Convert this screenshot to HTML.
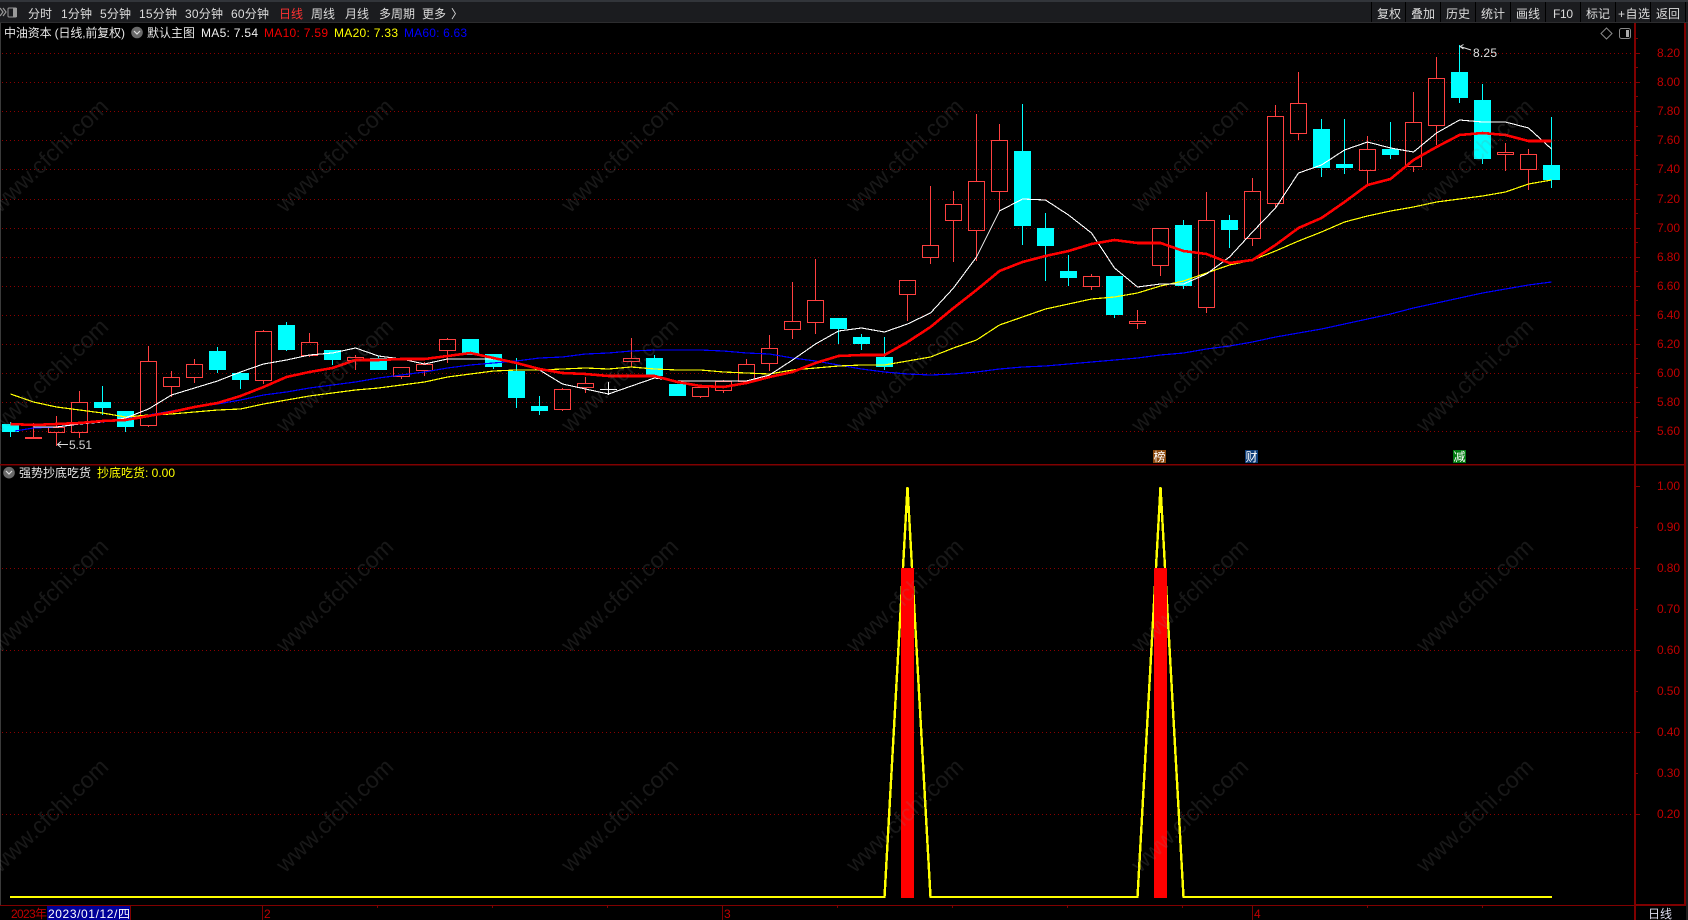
<!DOCTYPE html>
<html><head><meta charset="utf-8"><title>中油资本</title>
<style>
html,body{margin:0;padding:0;background:#000;width:1688px;height:920px;overflow:hidden}
svg{display:block}
text{font-family:"Liberation Sans","Noto Sans CJK SC",sans-serif;font-size:12px}
.c{shape-rendering:crispEdges}
</style></head><body>
<svg width="1688" height="920" viewBox="0 0 1688 920" xmlns="http://www.w3.org/2000/svg">
<rect width="1688" height="920" fill="#000"/>
<!-- toolbar -->
<g class="c">
<rect x="0" y="0" width="1688" height="2" fill="#32353a"/>
<rect x="0" y="2" width="1688" height="20" fill="#1b1c1f"/>
<rect x="0" y="22" width="1688" height="1" fill="#2c2c2e"/>
<path d="M1371.5 2V22M1405.5 2V22M1440.5 2V22M1475.5 2V22M1510.5 2V22M1545.5 2V22M1580.5 2V22M1615.5 2V22M1650.5 2V22M1685.5 2V22" stroke="#000" fill="none"/>
<rect x="0" y="23" width="1" height="882" fill="#3a3a3a"/>
<rect x="1686" y="23" width="2" height="897" fill="#1c1c1c"/>
</g>
<!-- toolbar icon -->
<path d="M0 8l3 4-3 4M3 8l3 4-3 4" stroke="#999" stroke-width="1.2" fill="none"/>
<rect x="8" y="8" width="8.5" height="9" rx="1" fill="none" stroke="#999"/><rect x="13" y="8" width="4" height="9" fill="#999"/>
<g fill="#dcdcdc">
<text x="28" y="18" textLength="24">分时</text>
<text x="61" y="18" textLength="31">1分钟</text>
<text x="100" y="18" textLength="31">5分钟</text>
<text x="139" y="18" textLength="38">15分钟</text>
<text x="185" y="18" textLength="38">30分钟</text>
<text x="231" y="18" textLength="38">60分钟</text>
<text x="279" y="18" textLength="24" fill="#ff3232">日线</text>
<text x="311" y="18" textLength="24">周线</text>
<text x="345" y="18" textLength="24">月线</text>
<text x="379" y="18" textLength="36">多周期</text>
<text x="422" y="18" textLength="24">更多</text>
<text x="451" y="18">〉</text>
<text x="1377" y="18" textLength="24">复权</text>
<text x="1411" y="18" textLength="24">叠加</text>
<text x="1446" y="18" textLength="24">历史</text>
<text x="1481" y="18" textLength="24">统计</text>
<text x="1516" y="18" textLength="24">画线</text>
<text x="1553" y="18" textLength="20">F10</text>
<text x="1586" y="18" textLength="24">标记</text>
<text x="1618" y="18" textLength="32">+自选</text>
<text x="1656" y="18" textLength="24">返回</text>
</g>
<!-- grid -->
<g class="c" stroke="#8b0000" stroke-dasharray="1 3" fill="none">
<path d="M2 53.5H1632M2 82.5H1632M2 111.5H1632M2 140.5H1632M2 169.5H1632M2 199.5H1632M2 228.5H1632M2 257.5H1632M2 286.5H1632M2 315.5H1632M2 344.5H1632M2 373.5H1632M2 402.5H1632M2 431.5H1632"/>
<path d="M2 568.5H1632M2 650.5H1632M2 732.5H1632M2 814.5H1632"/>
</g>
<!-- frame lines -->
<g class="c" fill="#800000">
<rect x="0" y="464" width="1685" height="1.5"/>
<rect x="1634" y="23" width="2" height="897"/>
<rect x="1684" y="23" width="2" height="882"/>
<rect x="0" y="905" width="1634" height="1"/>
<rect x="1634" y="904" width="52" height="2"/>
</g>
<path class="c" stroke="#800000" fill="none" d="M1636 38.5h2M1636 67.5h2M1636 96.5h2M1636 126.5h2M1636 155.5h2M1636 184.5h2M1636 213.5h2M1636 242.5h2M1636 271.5h2M1636 300.5h2M1636 329.5h2M1636 358.5h2M1636 387.5h2M1636 417.5h2M1636 53.5h4M1636 82.5h4M1636 111.5h4M1636 140.5h4M1636 169.5h4M1636 199.5h4M1636 228.5h4M1636 257.5h4M1636 286.5h4M1636 315.5h4M1636 344.5h4M1636 373.5h4M1636 402.5h4M1636 431.5h4M1636 486.5h4M1636 527.5h2M1636 568.5h4M1636 609.5h2M1636 650.5h4M1636 691.5h2M1636 732.5h4M1636 773.5h2M1636 814.5h4M130.5 906V920M262.5 906V920M722.5 906V920M1252.5 906V920M377.5 906v2M492.5 906v2M607.5 906v2M837.5 906v2M952.5 906v2M1067.5 906v2M1182.5 906v2M1367.5 906v2M1482.5 906v2"/>
<!-- axis labels -->
<g fill="#c00000">
<text x="1657" y="57" textLength="23">8.20</text><text x="1657" y="86" textLength="23">8.00</text><text x="1657" y="115" textLength="23">7.80</text><text x="1657" y="144" textLength="23">7.60</text><text x="1657" y="173" textLength="23">7.40</text><text x="1657" y="203" textLength="23">7.20</text><text x="1657" y="232" textLength="23">7.00</text><text x="1657" y="261" textLength="23">6.80</text><text x="1657" y="290" textLength="23">6.60</text><text x="1657" y="319" textLength="23">6.40</text><text x="1657" y="348" textLength="23">6.20</text><text x="1657" y="377" textLength="23">6.00</text><text x="1657" y="406" textLength="23">5.80</text><text x="1657" y="435" textLength="23">5.60</text>
<text x="1657" y="490" textLength="23">1.00</text><text x="1657" y="531" textLength="23">0.90</text><text x="1657" y="572" textLength="23">0.80</text><text x="1657" y="613" textLength="23">0.70</text><text x="1657" y="654" textLength="23">0.60</text><text x="1657" y="695" textLength="23">0.50</text><text x="1657" y="736" textLength="23">0.40</text><text x="1657" y="777" textLength="23">0.30</text><text x="1657" y="818" textLength="23">0.20</text>
</g>
<!-- candles -->
<path class="c" fill="#00ffff" d="M2 424h17v8H2zM10 422h1v15h-1zM94 402h17v6H94zM102 386h1v29h-1zM117 411h17v16h-17zM125 427h1v5h-1zM209 351h17v19h-17zM217 347h1v26h-1zM232 373h17v7h-17zM240 372h1v17h-1zM278 325h17v25h-17zM286 322h1v29h-1zM324 350h17v10h-17zM332 360h1v5h-1zM370 358h17v12h-17zM378 356h1v14h-1zM462 339h17v16h-17zM485 354h17v13h-17zM493 367h1v2h-1zM508 371h17v27h-17zM516 358h1v50h-1zM531 406h17v5h-17zM539 396h1v19h-1zM646 358h17v18h-17zM654 355h1v23h-1zM669 384h17v12h-17zM830 318h17v11h-17zM838 329h1v15h-1zM853 337h17v7h-17zM861 334h1v16h-1zM876 357h17v10h-17zM884 337h1v33h-1zM1014 151h17v75h-17zM1022 104h1v141h-1zM1037 228h17v18h-17zM1045 213h1v68h-1zM1060 271h17v7h-17zM1068 255h1v31h-1zM1106 276h17v39h-17zM1114 315h1v3h-1zM1175 225h17v61h-17zM1183 220h1v69h-1zM1221 220h17v10h-17zM1229 215h1v33h-1zM1313 129h17v39h-17zM1321 119h1v58h-1zM1336 164h17v4h-17zM1344 119h1v55h-1zM1382 149h17v6h-17zM1390 122h1v37h-1zM1451 72h17v26h-17zM1459 45h1v58h-1zM1474 100h17v59h-17zM1482 84h1v80h-1zM1543 165h17v15h-17zM1551 117h1v71h-1z"/>
<path class="c" fill="none" stroke="#ff4040" d="M33.5 423V437M25.5 437.5h16v1h-16zM56.5 416V427M56.5 433V446M48.5 427.5h16v5h-16zM79.5 391V402M79.5 433V438M71.5 402.5h16v30h-16zM148.5 346V361M148.5 426V427M140.5 361.5h16v64h-16zM171.5 371V377M171.5 387V397M163.5 377.5h16v9h-16zM194.5 359V364M194.5 378V383M186.5 364.5h16v13h-16zM263.5 330V331M263.5 381V384M255.5 331.5h16v49h-16zM309.5 333V342M309.5 356V357M301.5 342.5h16v13h-16zM355.5 355V357M355.5 361V370M347.5 357.5h16v3h-16zM401.5 377V379M393.5 367.5h16v9h-16zM424.5 362V364M424.5 371V376M416.5 364.5h16v6h-16zM447.5 338V339M447.5 351V363M439.5 339.5h16v11h-16zM562.5 388V389M562.5 410V411M554.5 389.5h16v20h-16zM585.5 377V383M585.5 388V393M577.5 383.5h16v4h-16zM631.5 338V358M631.5 362V367M623.5 358.5h16v3h-16zM700.5 397V398M692.5 387.5h16v9h-16zM723.5 380V381M723.5 391V393M715.5 381.5h16v9h-16zM746.5 359V364M738.5 364.5h16v17h-16zM769.5 335V348M769.5 364V371M761.5 348.5h16v15h-16zM792.5 282V321M792.5 330V339M784.5 321.5h16v8h-16zM815.5 259V300M815.5 323V334M807.5 300.5h16v22h-16zM907.5 295V321M899.5 280.5h16v14h-16zM930.5 186V245M930.5 258V264M922.5 245.5h16v12h-16zM953.5 191V204M953.5 221V262M945.5 204.5h16v16h-16zM976.5 114V181M976.5 231V261M968.5 181.5h16v49h-16zM999.5 124V140M999.5 192V211M991.5 140.5h16v51h-16zM1091.5 274V276M1091.5 287V290M1083.5 276.5h16v10h-16zM1137.5 310V321M1137.5 324V329M1129.5 321.5h16v2h-16zM1160.5 266V276M1152.5 228.5h16v37h-16zM1206.5 192V220M1206.5 308V313M1198.5 220.5h16v87h-16zM1252.5 178V191M1252.5 239V246M1244.5 191.5h16v47h-16zM1275.5 105V116M1275.5 204V208M1267.5 116.5h16v87h-16zM1298.5 72V103M1298.5 134V140M1290.5 103.5h16v30h-16zM1367.5 136V149M1367.5 171V184M1359.5 149.5h16v21h-16zM1413.5 92V122M1413.5 167V172M1405.5 122.5h16v44h-16zM1436.5 57V78M1436.5 126V145M1428.5 78.5h16v47h-16zM1505.5 143V152M1505.5 155V171M1497.5 152.5h16v2h-16zM1528.5 149V154M1528.5 170V190M1520.5 154.5h16v15h-16z"/>
<path class="c" fill="none" stroke="#fff" d="M608.5 382V395M600 389.5H617"/>
<!-- MA lines -->
<polyline class="c" fill="none" stroke="#0000ff" stroke-width="1.2" points="15,431 33.5,428 56.5,427 79.5,424 102.5,422 125.5,419 148.5,415 171.5,411 194.5,407 217.5,404 240.5,400 263.5,395 286.5,392 309.5,388 332.5,385 355.5,382 378.5,378 401.5,375 424.5,372 447.5,368 470.5,365 493.5,363 516.5,361 539.5,358 562.5,357 585.5,354 608.5,353 631.5,351 654.5,350 677.5,350 700.5,350 723.5,351 746.5,353 769.5,354 792.5,358 815.5,361 838.5,365 861.5,369 884.5,372 907.5,374 930.5,375 953.5,374 976.5,372 999.5,369 1022.5,367 1045.5,366 1068.5,364 1091.5,362 1114.5,360 1137.5,358 1160.5,355 1183.5,353 1206.5,349 1229.5,346 1252.5,342 1275.5,337 1298.5,333 1321.5,329 1344.5,324 1367.5,319 1390.5,314 1413.5,308 1436.5,303 1459.5,298 1482.5,293 1505.5,289 1528.5,285 1551.5,282"/>
<polyline class="c" fill="none" stroke="#ffff00" stroke-width="1.2" points="10.5,394 33.5,402 56.5,407 79.5,410 102.5,413 125.5,417 148.5,415 171.5,414 194.5,412 217.5,410 240.5,409 263.5,404 286.5,400 309.5,396 332.5,393 355.5,390 378.5,388 401.5,385 424.5,382 447.5,377 470.5,374 493.5,371 516.5,370 539.5,370 562.5,369 585.5,368 608.5,369 631.5,367 654.5,369 677.5,370 700.5,370 723.5,372 746.5,373 769.5,374 792.5,370 815.5,368 838.5,366 861.5,365 884.5,365 907.5,361 930.5,357 953.5,348 976.5,340 999.5,325 1022.5,317 1045.5,309 1068.5,304 1091.5,299 1114.5,297 1137.5,293 1160.5,286 1183.5,281 1206.5,273 1229.5,265 1252.5,260 1275.5,251 1298.5,241 1321.5,232 1344.5,222 1367.5,216 1390.5,211 1413.5,207 1436.5,202 1459.5,199 1482.5,196 1505.5,192 1528.5,184 1551.5,180"/>
<polyline class="c" fill="none" stroke="#fff" stroke-width="1.1" points="33.5,427 56.5,427 79.5,424 102.5,422 125.5,418 148.5,409 171.5,395 194.5,388 217.5,381 240.5,372 263.5,364 286.5,360 309.5,355 332.5,353 355.5,348 378.5,356 401.5,359 424.5,364 447.5,359 470.5,359 493.5,359 516.5,363 539.5,370 562.5,384 585.5,389 608.5,394 631.5,386 654.5,378 677.5,381 700.5,381 723.5,381 746.5,381 769.5,375 792.5,360 815.5,344 838.5,331 861.5,328 884.5,332 907.5,324 930.5,313 953.5,288 976.5,257 999.5,211 1022.5,199 1045.5,200 1068.5,215 1091.5,233 1114.5,268 1137.5,287 1160.5,284 1183.5,284 1206.5,274 1229.5,257 1252.5,232 1275.5,208 1298.5,173 1321.5,165 1344.5,150 1367.5,142 1390.5,148 1413.5,152 1436.5,133 1459.5,120 1482.5,122 1505.5,122 1528.5,128 1551.5,149"/>
<polyline class="c" fill="none" stroke="#ff0000" stroke-width="2.6" points="10.5,424 33.5,425 56.5,424 79.5,423 102.5,421 125.5,420 148.5,416 171.5,412 194.5,407 217.5,403 240.5,396 263.5,387 286.5,377 309.5,372 332.5,368 355.5,360 378.5,360 401.5,359 424.5,359 447.5,356 470.5,353 493.5,358 516.5,363 539.5,369 562.5,373 585.5,374 608.5,376 631.5,376 654.5,376 677.5,382 700.5,386 723.5,387 746.5,383 769.5,377 792.5,372 815.5,363 838.5,356 861.5,355 884.5,355 907.5,342 930.5,327 953.5,308 976.5,290 999.5,271 1022.5,262 1045.5,256 1068.5,251 1091.5,244 1114.5,240 1137.5,243 1160.5,243 1183.5,251 1206.5,254 1229.5,263 1252.5,260 1275.5,245 1298.5,228 1321.5,218 1344.5,202 1367.5,185 1390.5,179 1413.5,160 1436.5,147 1459.5,135 1482.5,133 1505.5,135 1528.5,141 1551.5,141"/>
<!-- high/low notes -->
<path fill="none" stroke="#ddd" d="M68 444.5H57.5M61 441.5l-3.5 3 3.5 3M1471 50l-11-3.5M1463.5 44.5l-3.5 2 3.5 2.5"/>
<text x="69" y="449" textLength="23" fill="#d0d0d0">5.51</text>
<text x="1473" y="57" textLength="24" fill="#e0e0e0">8.25</text>
<!-- marks -->
<g class="c"><rect x="1153" y="450" width="13" height="13" fill="#8b4a10"/><rect x="1245" y="450" width="13" height="13" fill="#0f3f7a"/><rect x="1453" y="450" width="13" height="13" fill="#007a10"/></g>
<g fill="#fff"><text x="1153.5" y="461">榜</text><text x="1245.5" y="461">财</text><text x="1453.5" y="461">减</text></g>
<!-- header -->
<text x="4" y="37" textLength="121" fill="#e6e6e6">中油资本 (日线,前复权)</text>
<circle cx="137" cy="32.5" r="5.8" fill="#6a6a6a"/><path d="M134 31l3 3 3-3" stroke="#ddd" stroke-width="1.2" fill="none"/>
<text x="147" y="37" textLength="48" fill="#e6e6e6">默认主图</text>
<text x="201" y="37" textLength="57" fill="#f0f0f0">MA5: 7.54</text>
<text x="264" y="37" textLength="64" fill="#f00000">MA10: 7.59</text>
<text x="334" y="37" textLength="64" fill="#ffff00">MA20: 7.33</text>
<text x="404" y="37" textLength="63" fill="#0000ff">MA60: 6.63</text>
<path fill="none" stroke="#8a8a8a" d="M1606.5 28l5.5 5.5-5.5 5.5-5.5-5.5z"/>
<rect x="1619.5" y="28.5" width="11" height="10" rx="2" fill="none" stroke="#888"/><rect x="1626" y="30" width="3" height="7" fill="#aaa"/>
<!-- indicator panel -->
<circle cx="9" cy="472.7" r="5.8" fill="#6a6a6a"/><path d="M6 471l3 3 3-3" stroke="#ddd" stroke-width="1.2" fill="none"/>
<text x="19" y="477" textLength="72" fill="#e6e6e6">强势抄底吃货</text>
<text x="97" y="477" textLength="78" fill="#ffff00">抄底吃货: 0.00</text>
<polyline class="c" fill="none" stroke="#ffff00" stroke-width="2.4" points="10,897 884.5,897 907.5,487 930.5,897 1137.5,897 1160.5,487 1183.5,897 1552,897"/>
<g class="c" fill="#ff0000"><rect x="901" y="568" width="13" height="330"/><rect x="1154" y="568" width="13" height="330"/></g>
<!-- date axis -->
<text x="11" y="918" fill="#c00000" textLength="36">2023年</text>
<rect class="c" x="47" y="906" width="83" height="14" fill="#000099"/>
<text x="48" y="918" fill="#fff" textLength="82">2023/01/12/四</text>
<g fill="#c00000"><text x="264" y="918">2</text><text x="724" y="918">3</text><text x="1254" y="918">4</text></g>
<text x="1648" y="918" textLength="24" fill="#dde">日线</text>
<!-- watermark -->
<g fill="#808080" opacity=".19">
<text style="font-size:23px" text-anchor="middle" textLength="152" transform="translate(55 161) rotate(-43.8)">www.cfchi.com</text>
<text style="font-size:23px" text-anchor="middle" textLength="152" transform="translate(340 161) rotate(-43.8)">www.cfchi.com</text>
<text style="font-size:23px" text-anchor="middle" textLength="152" transform="translate(625 161) rotate(-43.8)">www.cfchi.com</text>
<text style="font-size:23px" text-anchor="middle" textLength="152" transform="translate(910 161) rotate(-43.8)">www.cfchi.com</text>
<text style="font-size:23px" text-anchor="middle" textLength="152" transform="translate(1195 161) rotate(-43.8)">www.cfchi.com</text>
<text style="font-size:23px" text-anchor="middle" textLength="152" transform="translate(1480 161) rotate(-43.8)">www.cfchi.com</text>
<text style="font-size:23px" text-anchor="middle" textLength="152" transform="translate(55 381) rotate(-43.8)">www.cfchi.com</text>
<text style="font-size:23px" text-anchor="middle" textLength="152" transform="translate(340 381) rotate(-43.8)">www.cfchi.com</text>
<text style="font-size:23px" text-anchor="middle" textLength="152" transform="translate(625 381) rotate(-43.8)">www.cfchi.com</text>
<text style="font-size:23px" text-anchor="middle" textLength="152" transform="translate(910 381) rotate(-43.8)">www.cfchi.com</text>
<text style="font-size:23px" text-anchor="middle" textLength="152" transform="translate(1195 381) rotate(-43.8)">www.cfchi.com</text>
<text style="font-size:23px" text-anchor="middle" textLength="152" transform="translate(1480 381) rotate(-43.8)">www.cfchi.com</text>
<text style="font-size:23px" text-anchor="middle" textLength="152" transform="translate(55 601) rotate(-43.8)">www.cfchi.com</text>
<text style="font-size:23px" text-anchor="middle" textLength="152" transform="translate(340 601) rotate(-43.8)">www.cfchi.com</text>
<text style="font-size:23px" text-anchor="middle" textLength="152" transform="translate(625 601) rotate(-43.8)">www.cfchi.com</text>
<text style="font-size:23px" text-anchor="middle" textLength="152" transform="translate(910 601) rotate(-43.8)">www.cfchi.com</text>
<text style="font-size:23px" text-anchor="middle" textLength="152" transform="translate(1195 601) rotate(-43.8)">www.cfchi.com</text>
<text style="font-size:23px" text-anchor="middle" textLength="152" transform="translate(1480 601) rotate(-43.8)">www.cfchi.com</text>
<text style="font-size:23px" text-anchor="middle" textLength="152" transform="translate(55 821) rotate(-43.8)">www.cfchi.com</text>
<text style="font-size:23px" text-anchor="middle" textLength="152" transform="translate(340 821) rotate(-43.8)">www.cfchi.com</text>
<text style="font-size:23px" text-anchor="middle" textLength="152" transform="translate(625 821) rotate(-43.8)">www.cfchi.com</text>
<text style="font-size:23px" text-anchor="middle" textLength="152" transform="translate(910 821) rotate(-43.8)">www.cfchi.com</text>
<text style="font-size:23px" text-anchor="middle" textLength="152" transform="translate(1195 821) rotate(-43.8)">www.cfchi.com</text>
<text style="font-size:23px" text-anchor="middle" textLength="152" transform="translate(1480 821) rotate(-43.8)">www.cfchi.com</text>
</g>
</svg>
</body></html>
